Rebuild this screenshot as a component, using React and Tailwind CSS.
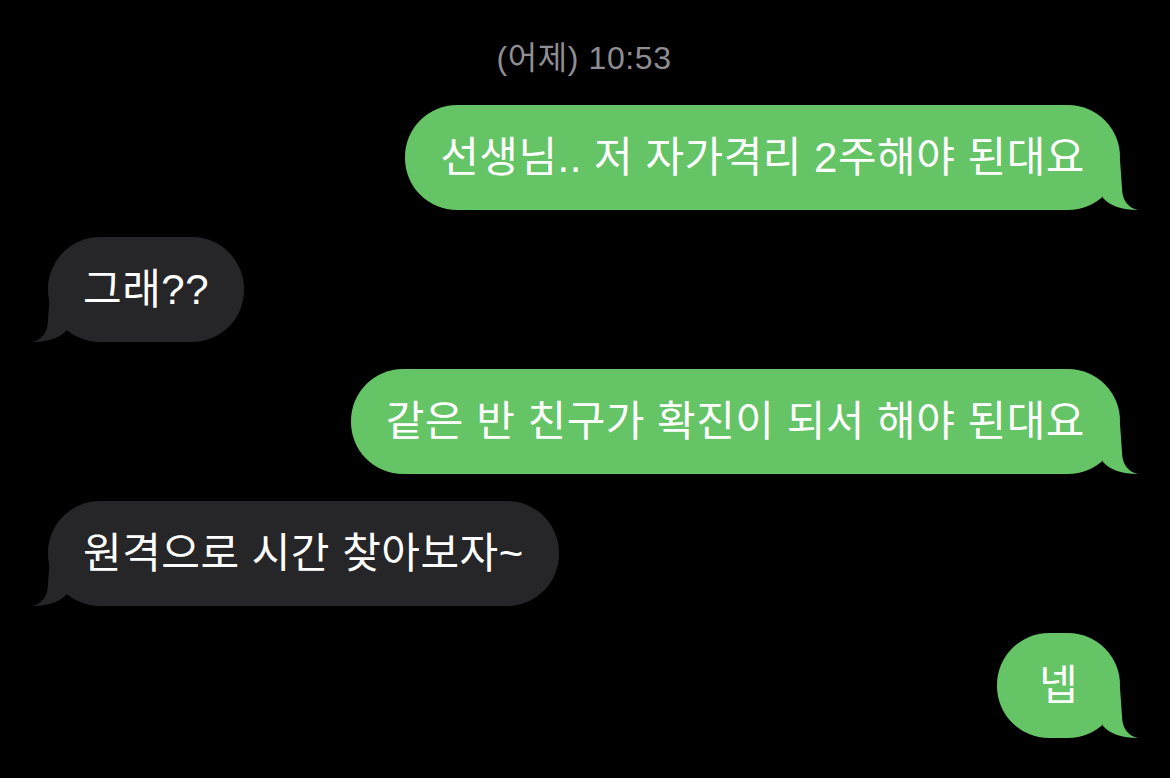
import React from "react";

const messages = [
  { from: "me", text: "선생님.. 저 자가격리 2주해야 된대요" },
  { from: "them", text: "그래??" },
  { from: "me", text: "같은 반 친구가 확진이 되서 해야 된대요" },
  { from: "them", text: "원격으로 시간 찾아보자~" },
  { from: "me", text: "넵" },
];

function Tail({ side, color }) {
  // tail drawn for the right side; mirrored for the left one
  return (
    <svg
      width="40"
      height="50"
      viewBox="0 0 40 50"
      className={
        side === "right"
          ? "absolute bottom-0 right-[-18px]"
          : "absolute bottom-0 left-[-16px] -scale-x-100"
      }
    >
      <path
        d="M0 0 L5 38 C12 46 24 50 40 50 C30 48 24 40 24 28 L22 0 Z"
        fill={color}
      />
    </svg>
  );
}

function Bubble({ from, text }) {
  const mine = from === "me";
  const color = mine ? "#65c466" : "#262629";
  return (
    <div className={mine ? "flex justify-end" : "flex justify-start"}>
      <div
        className={`relative flex h-[105px] min-w-[123px] items-center justify-center rounded-[52px] px-[35px] text-[42px] tracking-[0.5px] text-white ${
          mine ? "bg-[#65c466]" : "bg-[#262629]"
        }`}
      >
        <Tail side={mine ? "right" : "left"} color={color} />
        <span className="relative whitespace-nowrap">{text}</span>
      </div>
    </div>
  );
}

export default function App() {
  return (
    <div
      className="min-h-[778px] w-[1170px] overflow-hidden bg-black pl-[48px] pr-[50px] pt-[39px]"
      style={{ fontFamily: '"Liberation Sans", "Noto Sans CJK KR", sans-serif' }}
    >
      <div className="text-center text-[32px] leading-[38px] tracking-[0.6px] text-[#8e8e93]">
        (어제) 10:53
      </div>
      <div className="mt-[28px] flex flex-col gap-[27px]">
        {messages.map((m, i) => (
          <Bubble key={i} from={m.from} text={m.text} />
        ))}
      </div>
    </div>
  );
}
